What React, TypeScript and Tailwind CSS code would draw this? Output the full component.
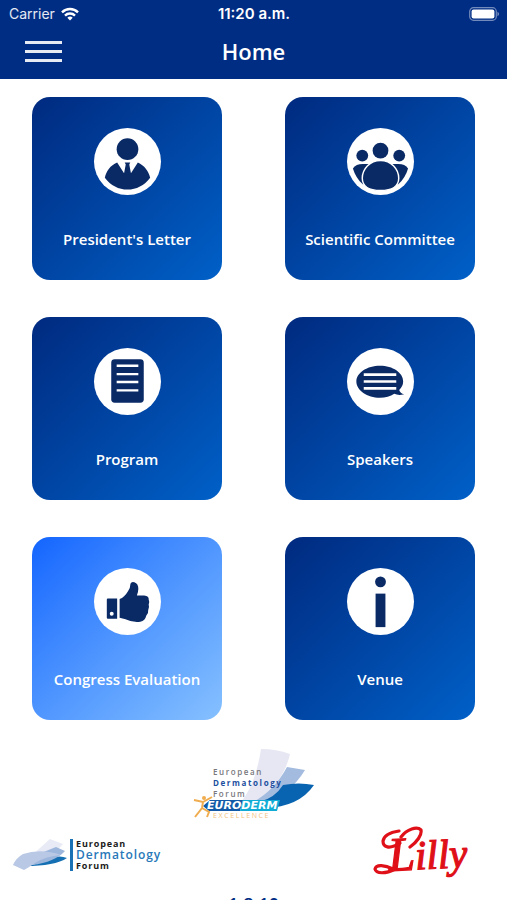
import type { ReactNode } from "react";

interface Tile {
  label: string;
  href: string;
  icon: ReactNode;
  active?: boolean;
}

const tiles: Tile[] = [
  { label: "President's Letter", href: "#letter", icon: <PresidentIcon /> },
  { label: "Scientific Committee", href: "#committee", icon: <CommitteeIcon /> },
  { label: "Program", href: "#program", icon: <ProgramIcon /> },
  { label: "Speakers", href: "#speakers", icon: <SpeakersIcon /> },
  { label: "Congress Evaluation", href: "#evaluation", icon: <ThumbIcon />, active: true },
  { label: "Venue", href: "#venue", icon: <InfoIcon /> },
];

function PresidentIcon() {
  return (
    <svg viewBox="0 0 68 68" className="h-full w-full fill-[#0a2a66]" aria-hidden="true">
      <circle cx="34" cy="21.5" r="11" />
      <path d="M23.5 35C16.5 38 12.5 43.5 11 50.5C17 58.5 25 62.5 34 62.5S51 58.5 57 50.5C55.5 43.5 51 38 44.5 35L37.5 46L35.8 37L36.8 35H31.2L32.2 37L30.5 46Z" />
    </svg>
  );
}

function CommitteeIcon() {
  return (
    <svg viewBox="0 0 68 68" className="h-full w-full fill-[#0a2a66]" aria-hidden="true">
      <circle cx="34" cy="23" r="8" />
      <circle cx="15.5" cy="28" r="6" />
      <circle cx="53" cy="28" r="6" />
      <path d="M6 41Q9 36.5 16 36.5H24L19 57H16Q9 51 6 41Z" />
      <path d="M62 41Q59 36.5 52 36.5H44L49 57H52Q59 51 62 41Z" />
      <path
        d="M34 33C45 33 52.5 42 52.5 51C52.5 60 44 63.5 34 63.5S15.5 60 15.5 51C15.5 42 23 33 34 33Z"
        stroke="white"
        strokeWidth="1.5"
      />
    </svg>
  );
}

function ProgramIcon() {
  return (
    <svg viewBox="0 0 68 68" className="h-full w-full" aria-hidden="true">
      <rect x="17.5" y="11.5" width="33" height="44" rx="3.5" fill="#0a2a66" />
      <path d="M23 18H45M23 26.5H45M23 34.5H45M23 43H45" stroke="white" strokeWidth="2.5" />
    </svg>
  );
}

function SpeakersIcon() {
  return (
    <svg viewBox="0 0 68 68" className="h-full w-full" aria-hidden="true">
      <path
        d="M33.5 18C46.5 18 57 25 57 34C57 37.5 55.5 40 53 42.5Q54 46 58 47Q52 48.5 48 46.5C44 49 39 50.5 33.5 50.5C20.5 50.5 9.5 43 9.5 34S20.5 18 33.5 18Z"
        fill="#0a2a66"
      />
      <path d="M17 27H50M17 34H50M17 41H50" stroke="white" strokeWidth="2.6" />
    </svg>
  );
}

function ThumbIcon() {
  return (
    <svg viewBox="0 0 68 68" className="h-full w-full fill-[#0a2a66]" aria-hidden="true">
      <path d="M14 31H23.5V51.5H14Q13 51.5 13 50.5V32Q13 31 14 31ZM18 44.5A2 2 0 1 0 18 48.5A2 2 0 1 0 18 44.5Z" fillRule="evenodd" />
      <path d="M26 31.5Q31 29.5 34.5 23.5Q37 20 37 16Q38 13.5 41 14.5Q45 16 45 21Q45 24 43.5 28H51Q56 28.5 55.5 32Q56.5 34 55.5 37Q56.5 40 55 43Q55.5 46 53 48.5Q52 53.5 47 54.5Q39 55.5 32 52L26 50.5Z" />
    </svg>
  );
}

function InfoIcon() {
  return (
    <svg viewBox="0 0 68 68" className="h-full w-full fill-[#0a2a66]" aria-hidden="true">
      <circle cx="34" cy="14" r="5.5" />
      <rect x="29" y="26" width="10" height="34" />
    </svg>
  );
}

function StatusBar() {
  return (
    <div className="grid grid-cols-3 items-center pr-2 pl-[9px] font-['Inter',sans-serif] text-sm leading-7">
      <div className="flex items-center gap-[6px] text-white/90">
        <span>Carrier</span>
        <svg width="18" height="14" viewBox="0 0 18 14" fill="none" stroke="white" strokeWidth="2.4" aria-hidden="true">
          <path d="M1 5.3A11.4 11.4 0 0 1 17 5.3" />
          <path d="M4 8.6A7 7 0 0 1 14 8.6" />
          <path d="M9 13.4L6.3 10.7A3.9 3.9 0 0 1 11.7 10.7Z" fill="white" stroke="none" />
        </svg>
      </div>
      <span className="text-center text-[15px] font-semibold">11:20 a.m.</span>
      <svg className="justify-self-end" width="30" height="14" viewBox="0 0 30 14" aria-hidden="true">
        <rect x="0.7" y="0.7" width="26.6" height="12.6" rx="3.8" fill="none" stroke="white" strokeOpacity="0.45" strokeWidth="1.2" />
        <rect x="2.6" y="2.6" width="22.8" height="8.8" rx="2" fill="white" />
        <path d="M28.5 4.8Q30 5.6 30 7T28.5 9.2Z" fill="white" fillOpacity="0.5" />
      </svg>
    </div>
  );
}

function EurodermLogo() {
  return (
    <svg width="122" height="72" viewBox="0 0 122 72" role="img" aria-label="Euroderm Excellence">
      <path d="M68 1Q83 1 97 6Q91 33 64 55L48 54Q63 35 68 1Z" fill="#e6e7f3" />
      <path d="M94 19L112 22Q96 49 66 54H60Q81 43 94 19Z" fill="#a3bbdf" />
      <path d="M90 37Q106 34 121 37Q106 59 72 60L66 54Q82 50 90 37Z" fill="#0864b0" />
      <g fontFamily="'Open Sans', sans-serif" fontSize="8" fontWeight="600" letterSpacing="1.6">
        <text x="20" y="27" fill="#77777c">European</text>
        <text x="20" y="38" fill="#1d4fa0" fontWeight="700">Dermatology</text>
        <text x="20" y="49" fill="#77777c">Forum</text>
      </g>
      <path d="M17 52H50L47 63H16L10 58Z" fill="#125aa8" />
      <path d="M50 52H87L84 63H47Z" fill="#10acd5" />
      <text x="14" y="61" fontFamily="'DejaVu Sans', sans-serif" fontStyle="italic" fontSize="11" fontWeight="700" fill="white">
        EURODERM
      </text>
      <text x="20" y="70" fontFamily="'Open Sans', sans-serif" fontSize="7" letterSpacing="1.6" fill="#efc27c">
        EXCELLENCE
      </text>
      <circle cx="11" cy="50" r="2" fill="#f0ad4f" />
      <path d="M1 52L10 54L19 49M10 54L9 60L2 69M9 60L16 64L14 69" fill="none" stroke="#f0ad4f" strokeWidth="2" />
    </svg>
  );
}

function ForumLogo() {
  return (
    <div className="flex items-center gap-[2px]">
      <svg width="56" height="34" viewBox="0 0 56 34" aria-hidden="true">
        <path d="M38 1L51 6L36 22L18 19Z" fill="#e8ebf5" />
        <path d="M39 20Q48 17 55 20Q43 28 13 28Q29 26 39 20Z" fill="#1470b3" />
        <path d="M44 9L53 13Q43 24 20 27L24 17Z" fill="#9db6dc" />
        <path d="M11 16Q29 10 49 17Q34 18 23 25Q16 30 12 32L1 27Q4 20 11 16Z" fill="#b9c8e5" />
      </svg>
      <div className="border-l-[3px] border-[#1a72b5] pl-[3px] font-['Open_Sans',sans-serif] text-[9px] leading-[10px] font-bold tracking-widest text-[#1b1b1b]">
        <p>European</p>
        <p className="text-xs leading-3 font-semibold text-[#2878b9]">Dermatology</p>
        <p>Forum</p>
      </div>
    </div>
  );
}

function LillyLogo() {
  return (
    <svg width="98" height="58" viewBox="0 0 98 58" role="img" aria-label="Lilly">
      <text
        x="16"
        y="45"
        transform="rotate(-3 16 45)"
        fontFamily="'Liberation Serif', serif"
        fontStyle="italic"
        fontSize="48"
        fill="#df1018"
        stroke="#df1018"
        strokeWidth="1.2"
      >
        L<tspan fontSize="41">illy</tspan>
      </text>
      {/* Flourishes round the name */}
      <g fill="none" stroke="#df1018" strokeWidth="3.2" strokeLinecap="round">
        <path d="M27 17C16 24 10 21 10 15C11 9 19 6 26 5" />
        <path d="M28 11C34 3 44 0 48 4C49 9 44 16 37 21" />
        <path d="M22 43C13 48 3 48 2 43C3 38 12 39 20 43" />
      </g>
    </svg>
  );
}

export default function App() {
  return (
    <div className="max-h-screen overflow-hidden bg-white font-['Open_Sans',sans-serif]">
      <header className="bg-[#002d84] text-white">
        <StatusBar />
        <div className="grid h-[51px] grid-cols-3 items-center px-[25px] pb-1">
          <button type="button" aria-label="Open menu" className="flex w-[37px] flex-col gap-[6px]">
            <span className="h-[3px] bg-white/90" />
            <span className="h-[3px] bg-white/90" />
            <span className="h-[3px] bg-white/90" />
          </button>
          <h1 className="text-center text-[22px] font-semibold">Home</h1>
        </div>
      </header>

      <main>
        <nav className="grid grid-cols-2 gap-x-[63px] gap-y-[37px] px-8 pt-[18px]">
          {tiles.map((tile) => (
            <a
              key={tile.href}
              href={tile.href}
              className={`flex h-[183px] flex-col items-center rounded-[18px] bg-linear-to-br pt-[31px] text-white ${
                tile.active ? "from-[#1264ff] to-[#86c0ff]" : "from-[#002a80] to-[#0060c8]"
              }`}
            >
              <span className="h-[67px] w-[67px] rounded-full bg-white">{tile.icon}</span>
              <span className="mt-[34px] text-[15px] leading-5 font-semibold">{tile.label}</span>
            </a>
          ))}
        </nav>

        {/* Sponsors */}
        <div className="mt-7 flex justify-center">
          <EurodermLogo />
        </div>
        <div className="mt-[6px] flex items-center justify-between pr-9 pl-3">
          <ForumLogo />
          <LillyLogo />
        </div>
      </main>

      <p className="mt-[6px] text-center text-lg leading-7 font-semibold text-[#002d84]">1.8.10</p>
    </div>
  );
}
